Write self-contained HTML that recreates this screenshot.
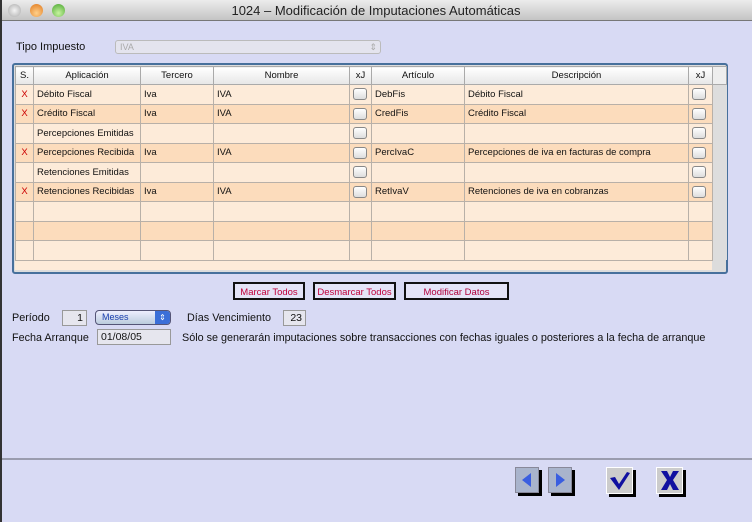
<!DOCTYPE html><html><head><style>
*{margin:0;padding:0;box-sizing:border-box}
body{width:752px;height:522px;background:#d8daf4;font-family:"Liberation Sans",sans-serif;position:relative;overflow:hidden;font-size:10px;color:#111}
.abs{position:absolute}
#tb{left:0;top:0;width:752px;height:21px;background:linear-gradient(#ececec,#c4c4c4);border-bottom:1px solid #777;text-align:center;font-size:13px;line-height:21px;color:#222}
.dot{position:absolute;top:4px;width:13px;height:13px;border-radius:50%}
table{border-collapse:collapse;position:absolute;left:15px;top:66px;table-layout:fixed}
td{border:1px solid #b8b0a8;height:19.5px;padding:0 3px;white-space:nowrap;overflow:hidden;font-size:9.5px}
th{font-weight:normal;font-size:9.5px;height:18px;background:linear-gradient(#fff,#e6e6e6);border:1px solid #aaa}
tr.a td{background:#fdebd9}tr.b td{background:#fcdcbc}
.x{color:#c00;text-align:center}
.cb{display:inline-block;width:14px;height:12px;border:1px solid #888;border-radius:3px;background:linear-gradient(#fff,#ddd);vertical-align:middle}
.btn{position:absolute;top:282px;height:18px;border:2px solid #111;background:#e4e4f7;color:#c0003a;font-size:9.5px;text-align:center;line-height:15px;padding-top:1px}
.fld{position:absolute;background:#e6e6ee;border:1px solid #999;font-size:10.5px;line-height:14px;height:16px}
.nav{position:absolute;top:467px;width:24px;height:26px;background:#a9b4cc;box-shadow:3px 3px 0 #000;border:1px solid #889}
.lb{position:absolute;font-size:10.8px}
</style></head><body>
<div id="tb" class="abs">1024 – Modificación de Imputaciones Automáticas
<div class="dot" style="left:8px;background:radial-gradient(#f4f4f4,#aaa)"></div>
<div class="dot" style="left:30px;background:radial-gradient(circle at 50% 70%,#ffd08a,#e0781c)"></div>
<div class="dot" style="left:52px;background:radial-gradient(circle at 50% 70%,#c8f4a0,#4aa630)"></div></div>
<div class="abs" style="left:16px;top:41px;font-size:11px">Tipo Impuesto</div>
<div class="abs" style="left:115px;top:40px;width:266px;height:14px;border:1px solid #bbb;border-radius:3px;background:#e4e4ee;color:#aaa;font-size:9px;padding-left:4px;line-height:12px">IVA<span style="float:right;padding-right:3px">⇕</span></div>
<div class="abs" style="left:12px;top:63px;width:716px;height:211px;border:2px solid #47709c;border-radius:3px;background:#dcdcdc"></div>
<div class="abs" style="left:15px;top:84px;width:697px;height:186px;background:#fdebd9"></div>
<table>
<colgroup><col style="width:18px"><col style="width:107px"><col style="width:73px"><col style="width:136px"><col style="width:22px"><col style="width:93px"><col style="width:224px"><col style="width:24px"><col style="width:14px"></colgroup>
<tr><th>S.</th><th>Aplicación</th><th>Tercero</th><th>Nombre</th><th>xJ</th><th>Artículo</th><th>Descripción</th><th>xJ</th><th style="background:#eee"></th></tr>
<tr class="a"><td class="x">X</td><td>Débito Fiscal</td><td>Iva</td><td>IVA</td><td><span class="cb"></span></td><td>DebFis</td><td>Débito Fiscal</td><td><span class="cb"></span></td><td rowspan="10" style="background:#ddd;border:none"></td></tr>
<tr class="b"><td class="x">X</td><td>Crédito Fiscal</td><td>Iva</td><td>IVA</td><td><span class="cb"></span></td><td>CredFis</td><td>Crédito Fiscal</td><td><span class="cb"></span></td></tr>
<tr class="a"><td></td><td>Percepciones Emitidas</td><td></td><td></td><td><span class="cb"></span></td><td></td><td></td><td><span class="cb"></span></td></tr>
<tr class="b"><td class="x">X</td><td>Percepciones Recibida</td><td>Iva</td><td>IVA</td><td><span class="cb"></span></td><td>PercIvaC</td><td>Percepciones de iva en facturas de compra</td><td><span class="cb"></span></td></tr>
<tr class="a"><td></td><td>Retenciones Emitidas</td><td></td><td></td><td><span class="cb"></span></td><td></td><td></td><td><span class="cb"></span></td></tr>
<tr class="b"><td class="x">X</td><td>Retenciones Recibidas</td><td>Iva</td><td>IVA</td><td><span class="cb"></span></td><td>RetIvaV</td><td>Retenciones de iva en cobranzas</td><td><span class="cb"></span></td></tr>
<tr class="a"><td></td><td></td><td></td><td></td><td></td><td></td><td></td><td></td></tr>
<tr class="b"><td></td><td></td><td></td><td></td><td></td><td></td><td></td><td></td></tr>
<tr class="a"><td></td><td></td><td></td><td></td><td></td><td></td><td></td><td></td></tr>
</table>
<div class="btn" style="left:233px;width:72px">Marcar Todos</div>
<div class="btn" style="left:313px;width:83px">Desmarcar Todos</div>
<div class="btn" style="left:404px;width:105px;color:#b0003a">Modificar Datos</div>
<div class="lb" style="left:12px;top:312px">Período</div>
<div class="fld" style="left:62px;top:310px;width:25px;text-align:right;padding-right:3px">1</div>
<div class="abs" style="left:95px;top:310px;width:76px;height:15px;border:1px solid #557;border-radius:4px;background:linear-gradient(#eef,#bcd);color:#1a3fb0;font-size:9px;line-height:13px;padding-left:6px">Meses<span style="position:absolute;right:0;top:0;width:15px;height:13px;background:#3b6fd8;color:#fff;border-radius:0 3px 3px 0;text-align:center;font-size:8px">⇕</span></div>
<div class="lb" style="left:187px;top:312px">Días Vencimiento</div>
<div class="fld" style="left:283px;top:310px;width:23px;text-align:right;padding-right:3px">23</div>
<div class="lb" style="left:12px;top:332px">Fecha Arranque</div>
<div class="fld" style="left:97px;top:329px;width:74px;padding-left:3px">01/08/05</div>
<div class="lb" style="left:182px;top:332px">Sólo se generarán imputaciones sobre transacciones con fechas iguales o posteriores a la fecha de arranque</div>
<div class="abs" style="left:2px;top:458px;width:750px;height:2px;background:#9a9cae"></div>
<div class="abs" style="left:0;top:0;width:2px;height:522px;background:#333"></div>
<div class="nav" style="left:515px"><svg width="22" height="24"><polygon points="15,5 6,12 15,19" fill="#3a5ee0"/></svg></div>
<div class="nav" style="left:548px"><svg width="22" height="24"><polygon points="7,5 16,12 7,19" fill="#3a5ee0"/></svg></div>
<div class="abs" style="left:606px;top:467px;width:27px;height:27px;background:#ccc;border:1px solid #fff;box-shadow:3px 3px 0 #000"><svg width="25" height="25"><path d="M3 10 L8 9 L12 16 L20 4 L23 5 L12 22 Z" fill="#1010a0"/></svg></div>
<div class="abs" style="left:656px;top:467px;width:27px;height:27px;background:#ccc;border:1px solid #fff;box-shadow:3px 3px 0 #000"><svg width="25" height="25"><path d="M4 3 L10 3 L13 9 L16 3 L22 3 L16 12 L22 22 L16 22 L13 16 L10 22 L4 22 L10 12 Z" fill="#1010a0"/></svg></div>
</body></html>
